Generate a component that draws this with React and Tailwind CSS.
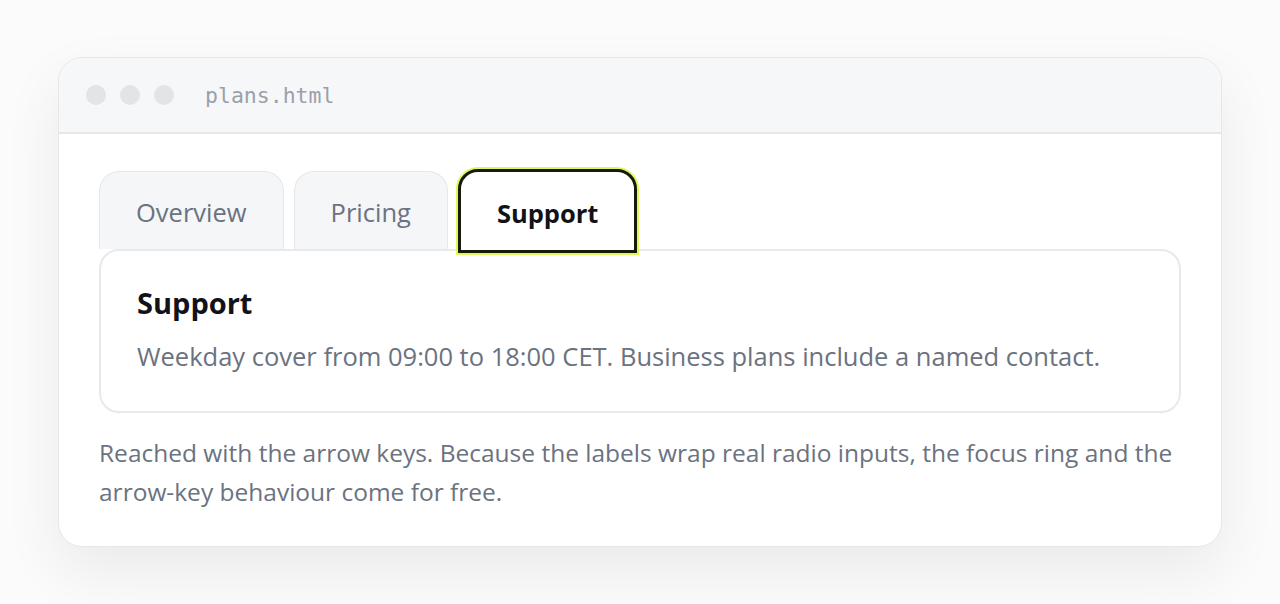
export default function App() {
  const tabs = ['Overview', 'Pricing', 'Support'];
  const active = 'Support';

  return (
    <div className="min-h-screen bg-[#fbfbfb] px-[58px] pt-[57px] pb-[58px] font-['Open_Sans',sans-serif]">
      <div className="rounded-[24px] border border-[#e6e7ea] bg-white shadow-[0_24px_60px_rgba(0,0,0,0.07)] overflow-hidden">
        {/* title bar */}
        <div className="h-[76px] flex items-center bg-[#f6f7f9] border-b-2 border-[#e7e8eb] pl-[27px]">
          <div className="flex gap-[14px]">
            <span className="w-5 h-5 rounded-full bg-[#e2e4e8]" />
            <span className="w-5 h-5 rounded-full bg-[#e2e4e8]" />
            <span className="w-5 h-5 rounded-full bg-[#e2e4e8]" />
          </div>
          <span className="ml-[31px] pt-[2px] text-[21.5px] text-[#9aa0aa] font-['DejaVu_Sans_Mono',monospace]">plans.html</span>
        </div>

        <div className="px-[40px] pt-[35px] pb-[35px]">
          {/* tabs */}
          <div className="flex items-end gap-[10px]">
            {tabs.map((tab) =>
              tab === active ? (
                <label
                  key={tab}
                  className="relative z-10 -mb-[4px] h-[84px] flex items-center justify-center px-[36px] pt-[4px] bg-white rounded-t-[20px] border-[3px] border-[#161a0b] shadow-[0_0_0_2px_#dff75c] text-[25.5px] font-bold text-[#111318]"
                >
                  <input type="radio" name="tab" className="sr-only" defaultChecked />
                  {tab}
                </label>
              ) : (
                <label
                  key={tab}
                  className="h-[78px] flex items-center justify-center px-[36px] pt-[3px] bg-[#f5f6f8] rounded-t-[20px] border border-b-0 border-[#e6e7ea] text-[25.5px] text-[#6b7280]"
                >
                  <input type="radio" name="tab" className="sr-only" />
                  {tab}
                </label>
              )
            )}
          </div>

          {/* panel */}
          <div className="rounded-[20px] border-2 border-[#e8e9ec] px-[36px] pt-[34px] pb-[38px]">
            <h2 className="text-[29px] font-bold text-[#111318] leading-[36px]">Support</h2>
            <p className="mt-[18px] text-[25.5px] text-[#6b7280] leading-[34px]">
              Weekday cover from 09:00 to 18:00 CET. Business plans include a named contact.
            </p>
          </div>

          <p className="mt-[20px] text-[24.5px] text-[#6b7280] leading-[39px]">
            Reached with the arrow keys. Because the labels wrap real radio inputs, the focus ring and the arrow-key behaviour come for free.
          </p>
        </div>
      </div>
    </div>
  );
}
